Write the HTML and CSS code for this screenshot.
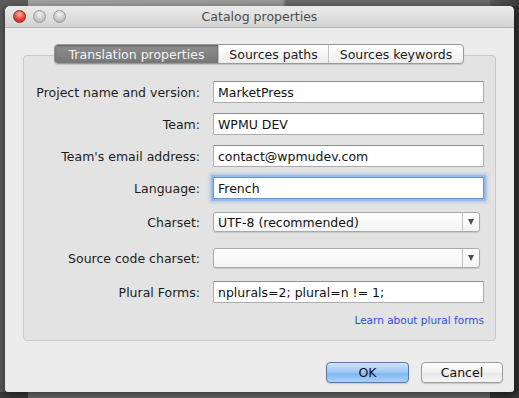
FILE: index.html
```html
<!DOCTYPE html>
<html lang="en">
<head>
    <meta charset="UTF-8">
    <title>Catalog properties</title>
    <link rel="stylesheet" href="styles.css">
</head>
<body>

<div class="backdrop-top">
    <div class="bd-left"></div>
    <div class="bd-mid"></div>
    <div class="bd-right"></div>
</div>

<div class="window">
    <div class="titlebar">
        <div class="lights">
            <span class="light red"></span>
            <span class="light"></span>
            <span class="light"></span>
        </div>
        <div class="title">Catalog properties</div>
    </div>

    <div class="content">
        <div class="tabs">
            <div class="tab active">Translation properties</div>
            <div class="tab">Sources paths</div>
            <div class="tab">Sources keywords</div>
        </div>

        <div class="group">
            <div class="form">
                <label class="lbl">Project name and version:</label>
                <div class="field"><input class="text" type="text" value="MarketPress"></div>

                <label class="lbl">Team:</label>
                <div class="field"><input class="text" type="text" value="WPMU DEV"></div>

                <label class="lbl">Team's email address:</label>
                <div class="field"><input class="text" type="text" value="contact@wpmudev.com"></div>

                <label class="lbl">Language:</label>
                <div class="field"><input class="text focus" type="text" value="French"></div>

                <label class="lbl">Charset:</label>
                <div class="field tall">
                    <div class="select">
                        <span class="select-value">UTF-8 (recommended)</span>
                        <span class="select-btn"><span class="arrow"></span></span>
                    </div>
                </div>

                <label class="lbl">Source code charset:</label>
                <div class="field tall">
                    <div class="select">
                        <span class="select-value"></span>
                        <span class="select-btn"><span class="arrow"></span></span>
                    </div>
                </div>

                <label class="lbl">Plural Forms:</label>
                <div class="field"><input class="text" type="text" value="nplurals=2; plural=n != 1;"></div>
            </div>
            <div class="link-row">
                <a class="link" href="#">Learn about plural forms</a>
            </div>
        </div>

        <div class="buttons">
            <button class="btn primary">OK</button>
            <button class="btn">Cancel</button>
        </div>
    </div>
</div>

<div class="backdrop-bottom">
    <div class="bb-left"></div>
    <div class="bb-mid"></div>
    <div class="bb-right"></div>
</div>

</body>
</html>
```

FILE: styles.css
```css
* {
    box-sizing: border-box;
}

body {
    margin: 0;
    width: 519px;
    height: 398px;
    overflow: hidden;
    background: linear-gradient(to right, #5a5a5a 0, #5a5a5a 5px, #3c3c3c 5px, #3c3c3c 514px, #2e2e2e 514px);
    font-family: "DejaVu Sans", sans-serif;
    font-size: 12.5px;
    color: #1c1c1c;
}

.backdrop-top {
    display: flex;
    height: 6px;
}

.bd-left {
    width: 28px;
    background: #5e5e5e;
}

.bd-mid {
    flex: 1;
    background: linear-gradient(to right, #a4a4a4, #9a9a9a 55%, #6a6a6a 56%, #6a6a6a);
}

.bd-right {
    width: 29px;
    background: linear-gradient(to right, #5a5a5a, #3a3a3a);
}

.backdrop-bottom {
    display: flex;
    height: 6px;
}

.bb-left {
    width: 28px;
    background: #3a3a3a;
}

.bb-mid {
    flex: 1;
    background: #6a6a6a;
}

.bb-right {
    width: 29px;
    background: #333;
}

.window {
    margin-left: 5px;
    width: 509px;
    height: 386px;
    background: #ececec;
    border-radius: 5px 5px 3px 3px;
    box-shadow: 0 2px 8px rgba(0, 0, 0, 0.55);
    display: flex;
    flex-direction: column;
    position: relative;
    z-index: 1;
}

.titlebar {
    height: 22px;
    display: flex;
    align-items: center;
    background: linear-gradient(#ebebeb, #d3d3d3);
    border-bottom: 1px solid #b4b4b4;
    border-radius: 5px 5px 0 0;
}

.lights {
    width: 65px;
    display: flex;
    gap: 7px;
    padding-left: 8px;
}

.light {
    width: 13px;
    height: 13px;
    border-radius: 50%;
    background: radial-gradient(circle at 50% 30%, #f4f4f4, #c6c6c6 60%, #a8a8a8);
    border: 1px solid #9a9a9a;
}

.light.red {
    background: radial-gradient(circle at 50% 30%, #ffb3a8, #e3433a 55%, #b0231c);
    border-color: #8e2a22;
}

.title {
    flex: 1;
    text-align: center;
    margin-left: -65px;
    font-size: 12.5px;
    color: #4c4c4c;
}

.content {
    flex: 1;
    display: flex;
    flex-direction: column;
    padding: 16px 11px 0 18px;
}

.tabs {
    align-self: flex-start;
    margin-left: 31px;
    display: flex;
    height: 20px;
    border: 1px solid #9a9a9a;
    border-radius: 4px;
    background: linear-gradient(#ffffff, #ededed);
    box-shadow: 0 1px 1px rgba(0, 0, 0, 0.15);
    position: relative;
    z-index: 1;
    overflow: hidden;
}

.tab {
    display: flex;
    align-items: center;
    justify-content: center;
    color: #1c1c1c;
    border-left: 1px solid #c4c4c4;
}

.tab:first-child {
    border-left: none;
}

.tab.active {
    width: 163px;
    background: linear-gradient(#8e8e8e, #777777);
    color: #f4f4f4;
    box-shadow: inset 0 1px 2px rgba(0, 0, 0, 0.35);
}

.tab:nth-child(2) {
    width: 110px;
}

.tab:nth-child(3) {
    width: 135px;
}

.group {
    width: 473px;
    margin-top: -9px;
    border: 1px solid #c9c9c9;
    border-radius: 4px;
    background: #e3e3e3;
    padding: 25px 11px 13px 10px;
}

.form {
    display: grid;
    grid-template-columns: 1fr 271px;
    column-gap: 13px;
    row-gap: 10px;
    align-items: center;
}

.lbl {
    text-align: right;
    white-space: nowrap;
}

.field {
    height: 22px;
    display: flex;
    align-items: center;
}

.field.tall {
    height: 26px;
}

.text {
    width: 100%;
    height: 22px;
    border: 1px solid #acacac;
    border-top-color: #8f8f8f;
    background: #fff;
    font-family: "DejaVu Sans", sans-serif;
    font-size: 12.5px;
    color: #111;
    padding: 1px 4px 0;
    margin: 0;
    outline: none;
}

.text.focus {
    border-color: #6d93c8;
    box-shadow: 0 0 0 2px #93bdf0, 0 0 3px 3px rgba(110, 160, 230, 0.5);
}

.select {
    width: 267px;
    height: 20px;
    display: flex;
    border: 1px solid #a9a9a9;
    border-radius: 3px;
    background: linear-gradient(#ffffff, #f4f4f4);
    box-shadow: 0 1px 1px rgba(0, 0, 0, 0.12);
}

.select-value {
    flex: 1;
    display: flex;
    align-items: center;
    padding-left: 4px;
    color: #111;
}

.select-btn {
    width: 17px;
    border-left: 1px solid #c2c2c2;
    display: flex;
    align-items: center;
    justify-content: center;
}

.arrow {
    width: 0;
    height: 0;
    border-left: 3.5px solid transparent;
    border-right: 3.5px solid transparent;
    border-top: 6px solid #4e4e4e;
}

.link-row {
    display: flex;
    justify-content: flex-end;
    margin-top: 10px;
    height: 14px;
    align-items: center;
}

.link {
    font-size: 10.5px;
    color: #2a4fe0;
    text-decoration: none;
}

.buttons {
    display: flex;
    justify-content: flex-end;
    gap: 12px;
    margin-top: 21px;
}

.btn {
    width: 82px;
    height: 21px;
    border: 1px solid #9c9c9c;
    border-radius: 4px;
    background: linear-gradient(#ffffff, #f0f0f0 50%, #e6e6e6 51%, #f6f6f6);
    font-family: "DejaVu Sans", sans-serif;
    font-size: 12.5px;
    color: #111;
    padding: 0;
    box-shadow: 0 1px 1px rgba(0, 0, 0, 0.15);
}

.btn.primary {
    width: 83px;
    border-color: #5878a8;
    background: linear-gradient(#cfe3fb, #9cc6f5 50%, #7db3f0 51%, #a8d2fa);
}
```
